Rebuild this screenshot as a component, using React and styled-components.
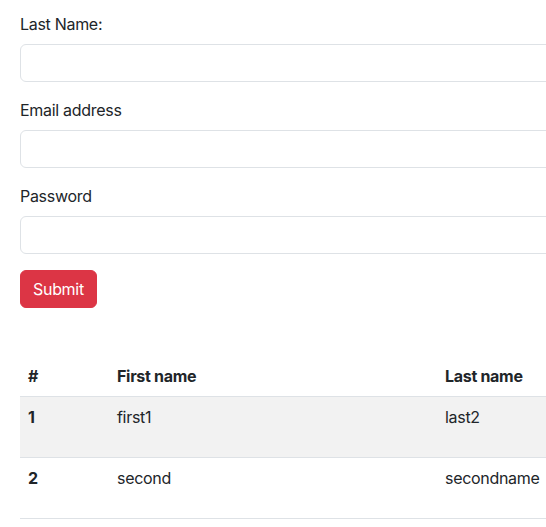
import React from 'react';
import styled, { createGlobalStyle } from 'styled-components';

const GlobalStyle = createGlobalStyle`
  html, body {
    margin: 0;
    padding: 0;
    background: #fff;
    overflow: hidden;
  }
  body {
    font-family: Inter, "Liberation Sans", sans-serif;
    font-size: 16px;
    line-height: 24px;
    letter-spacing: -0.3px;
    color: #212529;
  }
  * { box-sizing: border-box; }
`;

const rows = [
  { id: 1, first: 'first1', last: 'last2' },
  { id: 2, first: 'second', last: 'secondname' },
];

function App() {
  return (
    <Page>
      <GlobalStyle />
      <Form onSubmit={e => e.preventDefault()}>
        <Field>
          <Label>Last Name:</Label>
          <Input type="text" />
        </Field>
        <Field>
          <Label>Email address</Label>
          <Input type="email" />
        </Field>
        <Field>
          <Label>Password</Label>
          <Input type="password" />
        </Field>
        <SubmitButton type="submit">Submit</SubmitButton>
      </Form>

      <Table>
        <thead>
          <tr>
            <Th width="89px">#</Th>
            <Th width="328px">First name</Th>
            <Th>Last name</Th>
          </tr>
        </thead>
        <tbody>
          {rows.map((r, i) => (
            <Row key={r.id} striped={i % 2 === 0}>
              <Td bold>{r.id}</Td>
              <Td>{r.first}</Td>
              <Td>{r.last}</Td>
            </Row>
          ))}
        </tbody>
      </Table>
    </Page>
  );
}

export default App;

const Page = styled.div`
  width: 900px;
  padding: 12px 0 0 20px;
`;

const Form = styled.form`
  display: flex;
  flex-direction: column;
  align-items: flex-start;
`;

const Field = styled.div`
  width: 100%;
  margin-bottom: 16px;
`;

const Label = styled.label`
  display: block;
  margin-bottom: 8px;
`;

const Input = styled.input`
  display: block;
  width: 100%;
  height: 38px;
  padding: 6px 12px;
  font: inherit;
  border: 1px solid #dee2e6;
  border-radius: 6px;
  background: #fff;
`;

const SubmitButton = styled.button`
  height: 38px;
  padding: 6px 12px;
  font: inherit;
  letter-spacing: inherit;
  color: #fff;
  background: #dc3545;
  border: 1px solid #dc3545;
  border-radius: 6px;
  cursor: pointer;
`;

const Table = styled.table`
  width: 100%;
  margin-top: 48px;
  border-collapse: collapse;
`;

const Th = styled.th`
  width: ${p => p.width || 'auto'};
  padding: 8px;
  text-align: left;
  font-weight: 700;
  border-bottom: 1px solid #dee2e6;
`;

const Row = styled.tr`
  height: 61px;
  background: ${p => (p.striped ? '#f2f2f2' : '#fff')};
  border-bottom: 1px solid #dee2e6;
`;

const Td = styled.td`
  padding: 8px;
  vertical-align: top;
  font-weight: ${p => (p.bold ? 700 : 400)};
`;
